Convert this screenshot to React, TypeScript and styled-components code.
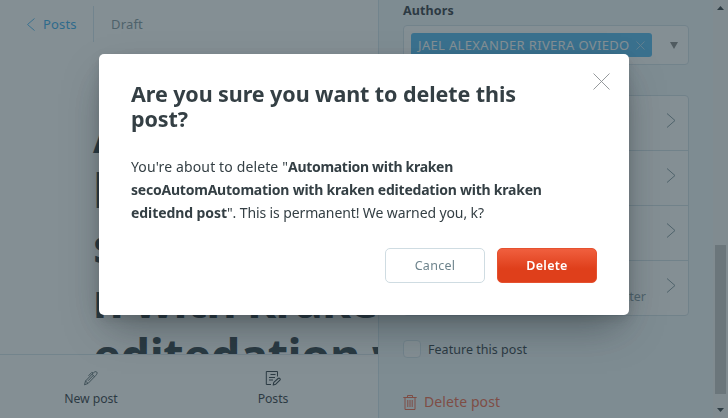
import React from "react";
import styled, { createGlobalStyle } from "styled-components";

const GlobalStyle = createGlobalStyle`
  * { box-sizing: border-box; }
  body { margin: 0; overflow: hidden; background: #fff; color: #15212a; font-family: "Noto Sans", "Open Sans", sans-serif; font-size: 13px; }
  p, h1, h2 { margin: 0; }
  svg { display: block; flex: none; }
  button { font-family: inherit; }
`;

const Screen = styled.div`
  display: grid;
  grid-template-columns: 378px 335px 15px;
  width: 728px;
  height: 418px;
  overflow: hidden;
`;

const Editor = styled.main`
  display: flex;
  flex-direction: column;
  height: 418px;
  min-width: 0;
`;
const EditorBody = styled.section`
  height: 354px;
  overflow: hidden;
`;
const EditorHeader = styled.header`
  display: flex;
  align-items: center;
  height: 36px;
  margin-top: 6px;
  padding-left: 26px;
  line-height: 36px;
`;
const BackLink = styled.a`
  display: flex;
  align-items: center;
  gap: 8px;
  width: 68px;
  height: 36px;
  border-right: 1px solid #cfe3ee;
  color: #1aa0ea;
  letter-spacing: 0.15px;
`;
const Status = styled.span`
  padding-left: 17px;
  color: #738a94;
  letter-spacing: 0.17px;
`;
const PostTitle = styled.h1`
  padding: 66px 0 0 93px;
  font-size: 47px;
  font-weight: 700;
  line-height: 55px;
  letter-spacing: -0.75px;
  white-space: nowrap;
`;
const TitleLine = styled.span<{ $tracking?: number }>`
  display: block;
  letter-spacing: ${(p) => p.$tracking ?? -0.75}px;
`;

const BottomNav = styled.nav`
  display: grid;
  grid-template-columns: 182px 182px;
  height: 64px;
  border-top: 1px solid #d3e2ea;
`;
const NavItem = styled.a`
  display: flex;
  flex-direction: column;
  align-items: center;
  gap: 4px;
  padding-top: 15px;
  font-size: 12.25px;
  line-height: 18px;
  letter-spacing: -0.08px;
`;

const Panel = styled.aside`
  height: 418px;
  padding: 2px 24px 0;
  border-left: 1px solid #d0e2ec;
  background: #f0f6f9;
`;
const FieldLabel = styled.div`
  height: 23px;
  font-size: 12.5px;
  font-weight: 700;
  line-height: 17px;
  letter-spacing: 0.12px;
`;
const Select = styled.div`
  display: flex;
  align-items: center;
  justify-content: space-between;
  width: 286px;
  height: 40px;
  padding: 0 10px 0 7px;
  border: 1px solid #d0dfe8;
  border-radius: 4px;
  background: #fff;
`;
const Token = styled.span`
  display: flex;
  align-items: center;
  justify-content: space-between;
  width: 241px;
  height: 24px;
  padding: 0 7px;
  border-radius: 3px;
  background: #3eb0ef;
  color: #fff;
  line-height: 24px;
  letter-spacing: 0.34px;
  white-space: nowrap;
`;
const SettingsList = styled.div`
  display: grid;
  grid-template-rows: 55px 55px 55px 56px;
  width: 286px;
  height: 221px;
  margin-top: 30px;
  border: 1px solid #cddce5;
  border-radius: 4px;
  background: #fff;
  overflow: hidden;
`;
const SettingsRow = styled.div`
  display: flex;
  align-items: center;
  justify-content: flex-end;
  gap: 20px;
  padding: 0 12px 5px;
  border-bottom: 1px solid #cddce5;
  color: #738a94;
  &:last-child { border-bottom: 0; padding-bottom: 7px; }
`;
const RowHint = styled.span`
  padding-top: 22px;
  font-size: 12.5px;
`;
const FeatureToggle = styled.label`
  display: flex;
  align-items: center;
  gap: 7px;
  height: 18px;
  margin-top: 24px;
  font-size: 12.5px;
  line-height: 18px;
`;
const FeatureText = styled.span`
  padding-top: 2px;
  letter-spacing: 0.03px;
`;
const Checkbox = styled.span`
  width: 18px;
  height: 18px;
  border: 1px solid #d0dfe8;
  border-radius: 4px;
  background: #fff;
`;
const DeleteLink = styled.a`
  display: flex;
  align-items: center;
  gap: 7px;
  margin-top: 34px;
  color: #f05230;
  font-size: 14px;
  line-height: 20px;
  letter-spacing: 0.1px;
`;

const ScrollTrack = styled.div`
  display: flex;
  flex-direction: column;
  align-items: center;
  padding: 6px 0 6px;
  background: #f4f4f4;
`;
const ScrollThumb = styled.div`
  width: 11px;
  height: 149px;
  margin: 235px 0 14px;
  background: #bdbdbd;
`;

const Overlay = styled.div`
  position: fixed;
  inset: 0;
  display: flex;
  align-items: flex-start;
  padding: 54px 0 0 99px;
  background: rgba(57, 74, 82, 0.62);
`;
const Dialog = styled.section`
  position: relative;
  width: 530px;
  height: 261px;
  padding: 27px 32px 32px;
  border-radius: 5px;
  background: #fff;
  box-shadow: 0 4px 12px rgba(0, 0, 0, 0.12), 0 18px 40px -8px rgba(15, 25, 30, 0.4);
  color: #343f44;
`;
const DialogTitle = styled.h2`
  font-size: 21.5px;
  font-weight: 700;
  line-height: 25px;
  letter-spacing: -0.08px;
  white-space: nowrap;
`;
const Message = styled.p`
  margin-top: 24px;
  font-size: 14px;
  line-height: 23px;
  white-space: nowrap;
`;
const Run = styled.span<{ $bold?: boolean; $tracking: number }>`
  font-weight: ${(p) => (p.$bold ? 700 : 400)};
  letter-spacing: ${(p) => p.$tracking}px;
`;
const CloseButton = styled.button`
  position: absolute;
  top: 19px;
  right: 19px;
  padding: 0;
  border: 0;
  background: none;
`;
const Actions = styled.footer`
  display: flex;
  justify-content: flex-end;
  gap: 12px;
  margin-top: 24px;
`;
const Button = styled.button<{ $danger?: boolean }>`
  width: 100px;
  height: 35px;
  padding: 0;
  border: 1px solid ${(p) => (p.$danger ? "#e5512f" : "#cfdce2")};
  border-radius: 5px;
  background: ${(p) => (p.$danger ? "linear-gradient(#f05f3e, #df3f1b 60%, #df3f1b)" : "#fff")};
  color: ${(p) => (p.$danger ? "#fff" : "#6d838c")};
  font-size: 12.5px;
  font-weight: ${(p) => (p.$danger ? 600 : 400)};
  line-height: 33px;
  letter-spacing: 0.3px;
`;

const Chevron = ({ left }: { left?: boolean }) =>
  left ? (
    <svg width="9" height="13" viewBox="0 0 9 13" fill="none" stroke="#3eb0ef">
      <path d="M8.5.5l-7 6 7 6" />
    </svg>
  ) : (
    <svg width="10" height="15" viewBox="0 0 10 15" fill="none" stroke="#738a94">
      <path d="M1 .5l8 7-8 7" />
    </svg>
  );

const Cross = ({ size, color }: { size: number; color: string }) => (
  <svg width={size} height={size} viewBox={`0 0 ${size} ${size}`} fill="none" stroke={color} strokeWidth="0.9">
    <path d={`M.5 .5L${size - 0.5} ${size - 0.5}M${size - 0.5} .5L.5 ${size - 0.5}`} />
  </svg>
);

const PenIcon = () => (
  <svg width="16" height="16" viewBox="0 0 16 16" fill="none" stroke="#35474f" strokeWidth="0.9" strokeLinejoin="round">
    <path d="M1.5 14.8l1-3.8 7.8-8.1c1.2-1.2 2.7-1.7 3.4-.9.8.7.3 2.2-.8 3.3l-7.8 8.1-3.6 1.4zM2.5 11l2.6 2.4M9 4.3l2.5 2.4M10 3l-1.2-.6-3.3 3.4M5 10.8l5.2-5.3" />
  </svg>
);

const PostsIcon = () => (
  <svg width="16" height="16" viewBox="0 0 16 16" fill="none" stroke="#15212a" strokeLinejoin="round">
    <path d="M6 14.5H1.3V1.5h11.2v5M5.5 4.5h5M4 7.5h6M4 10h4" />
    <path d="M8.2 15l.6-2.6 4.3-3.9c1.3-1 2.8.5 1.8 1.7l-4.1 4-2.6.8z" strokeWidth="1.1" />
  </svg>
);

const TrashIcon = () => (
  <svg width="14" height="15" viewBox="0 0 14 15" fill="none" stroke="#f05230">
    <path d="M.3 2.5h13.4M4.5 2.5v-2h5v2M2 2.5v12h10v-12M4.8 5v7M7 5v7M9.2 5v7" />
  </svg>
);

const Triangle = ({ up, size = 7, color = "#1c262c" }: { up?: boolean; size?: number; color?: string }) => (
  <svg width={size} height={size === 7 ? 4 : 7} viewBox="0 0 8 4" preserveAspectRatio="none">
    <path d={up ? "M0 4L4 0l4 4z" : "M0 0h8L4 4z"} fill={color} />
  </svg>
);

export default function App() {
  return (
    <>
      <GlobalStyle />
      <Screen>
        <Editor>
          <EditorBody>
            <EditorHeader>
              <BackLink><Chevron left />Posts</BackLink>
              <Status>Draft</Status>
            </EditorHeader>
            <PostTitle>
              <TitleLine>Automation with</TitleLine>
              <TitleLine>kraken</TitleLine>
              <TitleLine>secoAutomAutomatio</TitleLine>
              <TitleLine $tracking={-0.85}>n with kraken</TitleLine>
              <TitleLine $tracking={-0.5}>editedation with</TitleLine>
            </PostTitle>
          </EditorBody>
          <BottomNav>
            <NavItem><PenIcon />New post</NavItem>
            <NavItem><PostsIcon />Posts</NavItem>
          </BottomNav>
        </Editor>
        <Panel>
          <FieldLabel>Authors</FieldLabel>
          <Select>
            <Token>JAEL ALEXANDER RIVERA OVIEDO<Cross size={9} color="#a9d9f5" /></Token>
            <Triangle size={8} color="#777" />
          </Select>
          <SettingsList>
            <SettingsRow><Chevron /></SettingsRow>
            <SettingsRow><Chevron /></SettingsRow>
            <SettingsRow><Chevron /></SettingsRow>
            <SettingsRow><RowHint>newsletter</RowHint><Chevron /></SettingsRow>
          </SettingsList>
          <FeatureToggle><Checkbox /><FeatureText>Feature this post</FeatureText></FeatureToggle>
          <DeleteLink><TrashIcon />Delete post</DeleteLink>
        </Panel>
        <ScrollTrack>
          <Triangle up />
          <ScrollThumb />
          <Triangle />
        </ScrollTrack>
      </Screen>
      <Overlay>
        <Dialog role="dialog">
          <CloseButton aria-label="Close"><Cross size={17} color="#8a8f92" /></CloseButton>
          <DialogTitle>Are you sure you want to delete this<br />post?</DialogTitle>
          <Message>
            <Run $tracking={0.13}>You're about to delete "</Run>
            <Run $bold $tracking={-0.3}>Automation with kraken</Run><br />
            <Run $bold $tracking={-0.22}>secoAutomAutomation with kraken editedation with kraken</Run><br />
            <Run $bold $tracking={-0.08}>editednd post</Run>
            <Run $tracking={-0.11}>". This is permanent! We warned you, k?</Run>
          </Message>
          <Actions>
            <Button>Cancel</Button>
            <Button $danger>Delete</Button>
          </Actions>
        </Dialog>
      </Overlay>
    </>
  );
}
